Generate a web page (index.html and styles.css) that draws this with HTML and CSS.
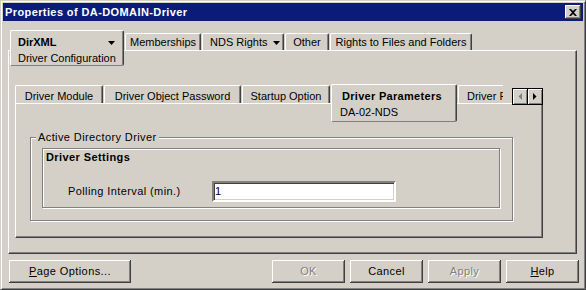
FILE: index.html
```html
<!DOCTYPE html>
<html lang="en">
  <head>
    <meta charset="UTF-8" />
    <title>Properties of DA-DOMAIN-Driver</title>
    <link rel="stylesheet" href="styles.css">
  </head>
  <body>
    <div class="window">
      <div class="titlebar">
        <span class="title">Properties of DA-DOMAIN-Driver</span>
        <button class="close">
          <svg width="8" height="7" viewBox="0 0 8 7">
            <path d="M0 0h2l2 2 2-2h2L5 3.5 8 7H6L4 5 2 7H0l3-3.5z" fill="#000" />
          </svg>
        </button>
      </div>

      <div class="content">
        <div class="top-tabs">
          <div class="tab tab-sel dirxml">
            <div class="tab-head">
              <b>DirXML</b>
              <svg class="caret" width="7" height="4" viewBox="0 0 7 4"><path d="M0 0h7L3.5 4z" /></svg>
            </div>
            <div class="tab-sub">Driver Configuration</div>
          </div>
          <div class="tab memberships">Memberships</div>
          <div class="tab nds">
            <span>NDS Rights</span>
            <svg class="caret" width="7" height="4" viewBox="0 0 7 4"><path d="M0 0h7L3.5 4z" /></svg>
          </div>
          <div class="tab other">Other</div>
          <div class="tab rights">Rights to Files and Folders</div>
        </div>

        <div class="panel outer-panel">
          <div class="inner-strip">
            <div class="inner-tabs">
              <div class="tab itab module">Driver Module</div>
              <div class="tab itab password">Driver Object Password</div>
              <div class="tab itab startup">Startup Option</div>
              <div class="tab tab-sel params">
                <div class="tab-head"><b>Driver Parameters</b></div>
                <div class="tab-sub">DA-02-NDS</div>
              </div>
              <div class="tab itab filter">Driver Filter</div>
            </div>
            <div class="scroller">
              <span class="arrow-btn">
                <svg width="4" height="7" viewBox="0 0 4 7"><path d="M4 0v7L0.5 3.5z" fill="#808080" /></svg>
              </span>
              <span class="arrow-btn">
                <svg width="4" height="7" viewBox="0 0 4 7"><path d="M0 0v7L3.5 3.5z" fill="#000" /></svg>
              </span>
            </div>
          </div>

          <div class="panel inner-panel">
            <div class="group ad-group">
              <span class="legend">Active Directory Driver</span>
              <div class="group settings">
                <div class="settings-title">Driver Settings</div>
                <div class="field-row">
                  <label class="field-label">Polling Interval (min.)</label>
                  <div class="textbox">1</div>
                </div>
              </div>
            </div>
          </div>
        </div>
      </div>

      <div class="footer">
        <button class="btn page-options"><u>P</u>age Options...</button>
        <div class="footer-right">
          <button class="btn btn-std disabled">OK</button>
          <button class="btn btn-std">Cancel</button>
          <button class="btn btn-std disabled">Apply</button>
          <button class="btn btn-std"><u>H</u>elp</button>
        </div>
      </div>
    </div>
  </body>
</html>
```

FILE: styles.css
```css
* {
  box-sizing: border-box;
}
body {
  margin: 0;
  background-color: #d4d0c8;
  font-family: "Liberation Sans", Arial, sans-serif;
  font-size: 11px;
  line-height: 13px;
  letter-spacing: 0.4px;
  color: #000;
}
.window {
  width: 586px;
  height: 290px;
  padding: 2px;
  border: 1px solid;
  border-color: #d4d0c8 #404040 #404040 #d4d0c8;
  box-shadow: inset 1px 1px #fff, inset -1px -1px #808080;
}
.titlebar {
  display: flex;
  justify-content: space-between;
  align-items: flex-start;
  height: 18px;
  padding: 0 2px;
  background-color: #0a1c78;
  color: #fff;
}
.title {
  font-weight: bold;
  line-height: 18px;
  letter-spacing: 0.4px;
}
.close {
  display: flex;
  align-items: center;
  justify-content: center;
  width: 16px;
  height: 14px;
  margin-top: 2px;
  padding: 0;
  border: none;
  background-color: #d4d0c8;
  box-shadow: inset -1px -1px #404040, inset 1px 1px #fff, inset -2px -2px #808080;
}

/* tabs */
.content {
  padding: 9px 6px 0 5px;
}
.top-tabs {
  display: flex;
  align-items: flex-start;
  gap: 1px;
  padding-left: 2px;
  margin-bottom: -16px;
  position: relative;
  z-index: 1;
  letter-spacing: 0;
}
.tab {
  flex-shrink: 0;
  height: 17px;
  margin-top: 3px;
  padding: 2px 0 0;
  border: 1px solid;
  border-color: #fff #404040 transparent #fff;
  border-bottom: none;
  border-radius: 2px 2px 0 0;
  box-shadow: inset -1px 0 #808080;
  text-align: center;
  white-space: nowrap;
  background-color: #d4d0c8;
}
.tab-sel {
  margin-top: 0;
  padding: 5px 0 0 7px;
  border-bottom: 1px solid #808080;
  border-radius: 2px;
  text-align: left;
}
.tab-head {
  display: flex;
  align-items: center;
  justify-content: space-between;
}
.tab-sub {
  margin-top: 3px;
}
.dirxml {
  width: 114px;
  height: 36px;
}
.dirxml .tab-head {
  padding-right: 8px;
}
.memberships {
  width: 76px;
}
.nds {
  display: flex;
  align-items: center;
  justify-content: space-between;
  width: 82px;
  padding: 1px 3px 0 7px;
}
.other {
  width: 44px;
}
.rights {
  width: 142px;
}

.panel {
  border: 1px solid;
  border-color: #fff #404040 #404040 #fff;
  box-shadow: inset -1px -1px #808080;
}
.outer-panel {
  width: 569px;
  height: 204px;
  padding: 33px 0 0 6px;
}
.inner-strip {
  display: flex;
  align-items: flex-start;
  width: 528px;
  margin-bottom: -19px;
  position: relative;
  z-index: 1;
}
.inner-tabs {
  display: flex;
  align-items: flex-start;
  gap: 1px;
  width: 488px;
  overflow: hidden;
  letter-spacing: 0;
}
.itab {
  height: 18px;
  margin-top: 1px;
  padding-top: 4px;
}
.module {
  width: 88px;
}
.password {
  width: 137px;
}
.startup {
  width: 88px;
}
.params {
  width: 126px;
  height: 38px;
  padding-left: 8px;
}
.params .tab-head {
  padding-left: 2px;
  letter-spacing: 0.3px;
}
.filter {
  width: 70px;
  padding-left: 8px;
  text-align: left;
}
.scroller {
  display: flex;
  margin: 4px 0 0 auto;
}
.arrow-btn {
  display: flex;
  align-items: center;
  justify-content: center;
  width: 16px;
  height: 17px;
  border: 1px solid #000;
  background-color: #d4d0c8;
  box-shadow: inset 1px 1px #fff, inset -1px -1px #808080;
}
.arrow-btn + .arrow-btn {
  margin-left: -1px;
}

/* group boxes */
.inner-panel {
  width: 528px;
  height: 135px;
  padding: 33px 0 0 14px;
}
.group {
  position: relative;
  border: 1px solid #808080;
  box-shadow: inset 1px 1px #fff, 1px 1px #fff;
}
.ad-group {
  width: 483px;
  height: 84px;
  padding: 10px 0 0 11px;
}
.legend {
  position: absolute;
  top: -7px;
  left: 5px;
  padding: 0 2px;
  background-color: #d4d0c8;
}
.settings {
  width: 458px;
  height: 60px;
  padding: 2px 0 0 3px;
}
.settings-title {
  font-weight: bold;
}
.field-row {
  display: flex;
  align-items: center;
  margin-top: 17px;
  padding-left: 22px;
}
.field-label {
  width: 144px;
}
.textbox {
  width: 184px;
  height: 21px;
  padding: 2px 1px;
  border: 2px solid;
  border-color: #808080 #fff #fff #808080;
  box-shadow: inset 1px 1px #404040, inset -1px -1px #d4d0c8;
  background-color: #fff;
}

/* buttons */
.footer {
  display: flex;
  padding: 6px 4px 0 6px;
}
.footer-right {
  display: flex;
  gap: 5px;
  margin-left: auto;
}
.btn {
  height: 23px;
  padding: 0;
  border: none;
  background-color: #d4d0c8;
  box-shadow: inset -1px -1px #404040, inset 1px 1px #fff, inset -2px -2px #808080;
  font: inherit;
  letter-spacing: inherit;
  color: #000;
}
.page-options {
  width: 122px;
}
.btn-std {
  width: 73px;
}
.btn.disabled {
  color: #808080;
  text-shadow: 1px 1px #fff;
}
```
